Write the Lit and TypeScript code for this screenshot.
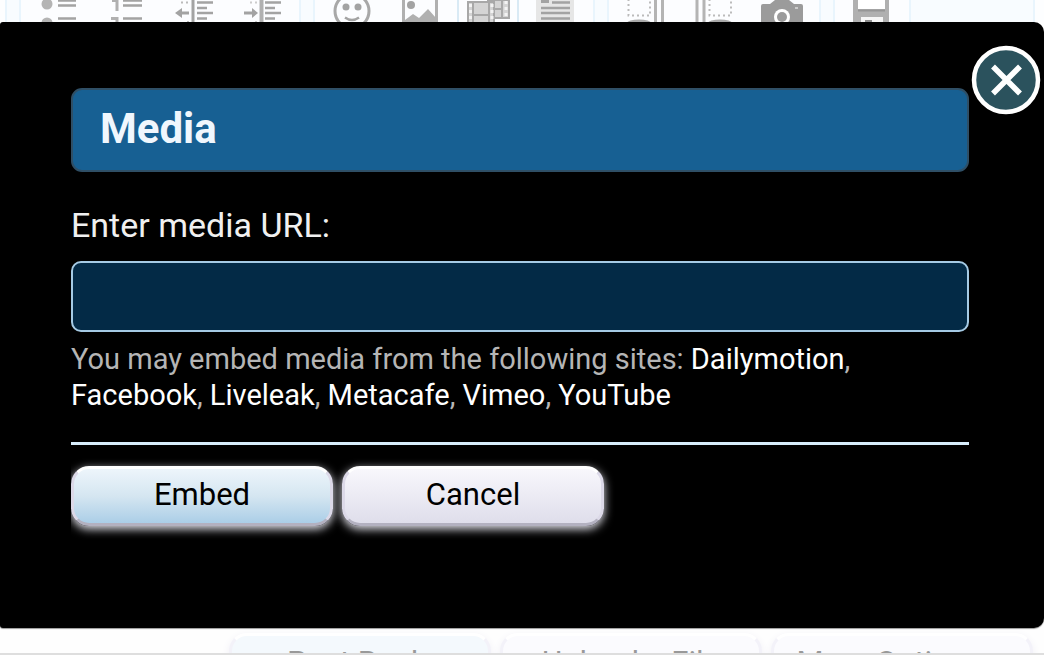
import { LitElement, html, css, svg } from "lit";
import { customElement, state } from "lit/decorators.js";

const G = "#a3a3a3";

const bullets = svg`<g fill="#b4b4b4"><circle cx="23" cy="4" r="5.5"/><circle cx="23" cy="23" r="5.5"/></g>
  <path d="M34 0.5H52M34 5.5H52M34 18.5H52" stroke=${G} stroke-width="2.5"/>`;
const numbers = svg`<path d="M20 0.5H25V11M19 18.5H25V24" fill="none" stroke="#b0b0b0" stroke-width="3"/>
  <path d="M31 0.5H50M31 5.5H50M31 18.5H50" stroke=${G} stroke-width="2.5"/>`;
const outdent = svg`<path d="M33 0V22" stroke=${G} stroke-width="3"/>
  <path d="M37 2.500H53M37 8H47M37 13H53M37 18.500H47" stroke=${G} stroke-width="2.500"/>
  <path d="M19 13H29" stroke=${G} stroke-width="3"/><path d="M15 13L22 8V18Z" fill=${G}/>
  <path d="M21 2.500H23M26 2.500H28M27 22H29" stroke="#bbb" stroke-width="2"/>`;
const indent = svg`<path d="M33.500 0V22" stroke="#b0b0b0" stroke-width="4"/>
  <path d="M37 2.500H53M37 8H47M37 13H53M37 18.500H47" stroke=${G} stroke-width="2.500"/>
  <path d="M16 13H26" stroke=${G} stroke-width="3"/><path d="M30 13L24 8V18Z" fill=${G}/>
  <path d="M22 2.500H24M27 2.500H29M27 22H29" stroke="#ccc" stroke-width="2"/>`;
const smiley = svg`<circle cx="34" cy="11" r="17" fill="none" stroke="#a8a8a8" stroke-width="3"/>
  <g fill=${G}><circle cx="28" cy="7" r="3.500"/><circle cx="40" cy="7" r="3.500"/></g>
  <path d="M27 17.500Q34 22.500 41 17.500" fill="none" stroke=${G} stroke-width="2.500"/>`;
const picture = svg`<path d="M17.500 0V22M50.500 0V22" stroke="#b0b0b0" stroke-width="3"/>
  <circle cx="25" cy="5" r="4" fill=${G}/>
  <path d="M19 22V20L27 14L33 18L42 9L50 18V22Z" fill="#b0b0b0"/>`;
const film = svg`<path d="M34 0H55V18H34Z" fill="#d4d4d4" stroke="#a8a8a8" stroke-width="2"/>
  <path d="M14 2H40V24H14Z" fill="#d4d4d4" stroke="#a8a8a8" stroke-width="2"/>
  <path d="M19 2V22M35 0V22M48 0V18M19 15H35M41 9H48" stroke="#a8a8a8" stroke-width="2"/>
  <path d="M16.500 4V22M38 4V22M52 1V18" stroke="#f3f3f3" stroke-width="3" stroke-dasharray="3 3"/>`;
const article = svg`<path d="M14 0H52V22H14Z" fill="#e6e6e6"/><path d="M19 0H27V3H19Z" fill=${G}/>
  <path d="M30 2.500H48M19 8H48M19 13H48M19 18.500H48" stroke=${G} stroke-width="2.500"/>`;
const columnLeft = svg`<path d="M16.500 -1V15.500H38V-1" fill="none" stroke="#bbb" stroke-width="2" stroke-dasharray="2 3"/>
  <path d="M43.500 0V22M50.500 0V22" stroke="#b4b4b4" stroke-width="3"/><ellipse cx="27" cy="23" rx="12" ry="3.500" fill="#a8a8a8"/>`;
const columnRight = svg`<path d="M29.500 -1V15.500H51V-1" fill="none" stroke="#bbb" stroke-width="2" stroke-dasharray="2 3"/>
  <path d="M17 0V22M24 0V22" stroke="#b4b4b4" stroke-width="3"/><ellipse cx="40" cy="23" rx="12" ry="3.500" fill="#a8a8a8"/>`;
const camera = svg`<path d="M13 22V6Q13 4 15 4H22L27 0H41L46 4H53Q55 4 55 6V22Z" fill="#9b9b9b"/>
  <circle cx="34" cy="17" r="8" fill="#fff"/><circle cx="34" cy="17" r="5" fill="#9b9b9b"/><path d="M47 8H50" stroke="#ccc" stroke-width="2"/>`;
const disk = svg`<path d="M15 0H51V22H15Z" fill="#b0b0b0"/><path d="M20 0H47V9H20Z" fill="#fff"/>
  <path d="M20 10.500H47" stroke="#969696" stroke-width="2"/><path d="M23 17H45V22H23Z" fill="#f6f6f6"/><path d="M27 20H34V22H27Z" fill="#8d8d8d"/>`;

const GROUPS = [
  [["Unordered list", bullets], ["Ordered list", numbers], ["Outdent", outdent], ["Indent", indent]],
  [["Smilies", smiley], ["Image", picture], ["Media", film], ["Quote", article]],
  [["Left column", columnLeft], ["Right column", columnRight], ["Photo", camera]],
  [["Drafts", disk]],
] as const;

const SITES = ["Dailymotion", "Facebook", "Liveleak", "Metacafe", "Vimeo", "YouTube"];

@customElement("editor-toolbar")
export class EditorToolbar extends LitElement {
  static styles = css`
    :host { display: block; height: 22px; overflow: hidden; background: #fdfeff; }
    .bar { display: flex; gap: 12px; height: 22px; margin: 0 9px 0 5px; padding-left: 12px;
      background: #f8fcff; border: solid #e9f5fd; border-width: 0 2px; }
    .group { display: flex; padding: 0 3px; background: #fcfdff; border: solid #e9f5fd; border-width: 0 2px; }
    .tool { width: 68px; height: 22px; padding: 0; border: 0; background: none; }
    .tool svg { display: block; }
    .active { background: linear-gradient(90deg, transparent 3px, #d9eaf5 3px 5px, #fcfdff 5px 63px, #d9eaf5 63px 65px, transparent 65px); }
  `;
  render() {
    return html`<div class="bar">${GROUPS.map((g) => html`<div class="group">${g.map(([name, icon]) => html`
      <button class="tool ${name === "Media" ? "active" : ""}" aria-label=${name}><svg width="68" height="22" viewBox="0 0 68 22">${icon}</svg></button>`)}</div>`)}</div>`;
  }
}

@customElement("media-dialog")
export class MediaDialog extends LitElement {
  @state() private url = "";
  static styles = css`
    :host { display: block; position: relative; box-sizing: border-box; padding: 66px 75px 80px 71px;
      background: #000; border-radius: 3px 10px 10px 3px; box-shadow: 0 1px 1px #999; }
    .close { position: absolute; top: 23px; right: 3px; width: 70px; height: 70px; padding: 0; border: 0; background: none; }
    .close svg { display: block; }
    .title { margin: 0; padding: 15px 27px 17px; border: 2px solid #2f4f66; border-radius: 11px; background: #176093;
      color: #f0f7fd; font-size: 42px; line-height: 48px; font-weight: 700; }
    .label { display: block; margin-top: 33px; color: #f0f0f0; font-size: 34px; line-height: 40px; }
    .url { display: block; box-sizing: border-box; width: 100%; height: 71px; margin-top: 16px; padding: 0 16px;
      border: 2px solid #a5cae4; border-radius: 10px; outline: 0; background: #032a46; color: #fff; font: 34px Roboto, sans-serif; }
    .hint { margin: 9px 0 0; color: #b5b5b5; font-size: 29px; line-height: 36px; }
    .site { color: #fff; }
    .actions { display: flex; gap: 9px; margin-top: 29px; padding: 21px 0 20px; border-top: 3px solid #d7edfc; overflow: hidden; }
    .button { box-sizing: border-box; width: 262px; height: 60px; padding: 0 0 3px; border: 3px solid;
      border-color: #fff #dcd9e8 #b3b1c0; border-radius: 18px; color: #000; font: 31px Roboto, sans-serif;
      background: linear-gradient(#f8f7fc, #dfdeeb); box-shadow: 0 3px 10px #e4e4ec; }
    .primary { background: linear-gradient(#edf5fb, #d5e6f1 50%, #abcee7); }
  `;
  render() {
    return html`
      <button class="close" aria-label="Close"><svg width="70" height="70" viewBox="0 0 70 70">
        <circle cx="35" cy="35" r="32" fill="#2b525d" stroke="#fff" stroke-width="4.500"/>
        <path d="M22 21.500L49 48.500M49 21.500L22 48.500" stroke="#fff" stroke-width="5.500"/></svg></button>
      <h1 class="title">Media</h1>
      <label class="label" for="url">Enter media URL:</label>
      <input class="url" id="url" type="text" .value=${this.url} @input=${(e: Event) => (this.url = (e.target as HTMLInputElement).value)}>
      <p class="hint">You may embed media from the following sites: ${SITES.map((s, i) => html`${i ? ", " : ""}<span class="site">${s}</span>`)}</p>
      <div class="actions"><button class="button primary">Embed</button><button class="button">Cancel</button></div>`;
  }
}

@customElement("app-root")
export class AppRoot extends LitElement {
  static styles = css`
    :host { display: flex; flex-direction: column; min-height: 100vh; background: #fefefe; font-family: Roboto, sans-serif; }
    .dialog { flex: 1; }
    .footer { display: flex; justify-content: flex-end; gap: 9px; box-sizing: border-box; height: 27px; padding: 5px 11px 0 0;
      overflow: hidden; border-bottom: 2px solid #dedede; }
    .reply { flex: none; box-sizing: border-box; width: 262px; height: 61px; padding: 0 0 2px; border: 3px solid;
      border-color: #fff #f3f2f9 #ddd; border-radius: 18px; background: #fbfbfe; color: #999; font: 31px Roboto, sans-serif;
      box-shadow: 0 3px 10px #f0eff6; }
    .main { background: #f4f9fd; }
  `;
  render() {
    return html`<editor-toolbar></editor-toolbar>
      <media-dialog class="dialog" role="dialog" aria-label="Media"></media-dialog>
      <div class="footer"><button class="reply main">Post Reply</button><button class="reply">Upload a File</button><button class="reply">More Options...</button></div>`;
  }
}
